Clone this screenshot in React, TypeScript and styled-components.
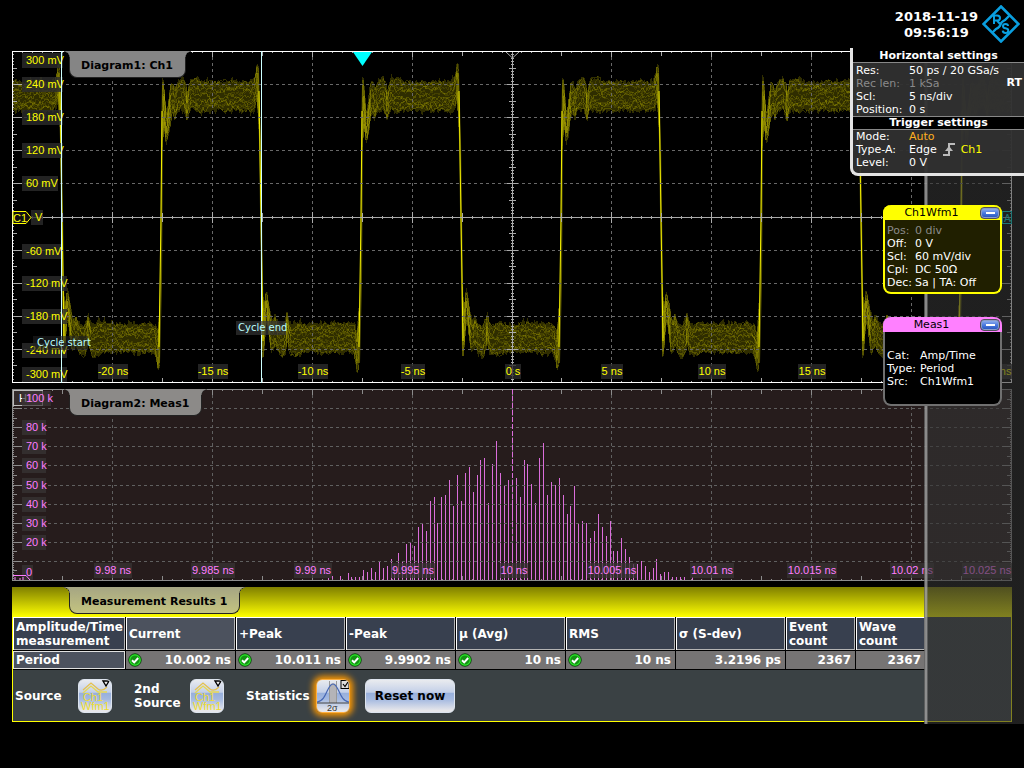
import React from "react";
import styled, { createGlobalStyle } from "styled-components";

const GlobalStyle = createGlobalStyle`
  *, *::before, *::after { box-sizing: border-box; }
  body {
    margin: 0;
    background: #000;
    color: #fff;
    font: 11px/13px "DejaVu Sans", Verdana, sans-serif;
  }
  button { font: inherit; padding: 0; cursor: pointer; }
`;

/* ---------- geometry ---------- */

const W = 1000;
const WAVE_H = 332;
const HISTO_H = 192;

const gridX = (i: number) => Math.round(i * 99.9);
const tickX = (i: number) => Math.round(i * 9.99);
const gridY = (i: number, h: number) => Math.round((i * (h - 1)) / 10);

const range = (n: number) => Array.from({ length: n }, (_, i) => i);

function makeRandom(seed: number) {
  let s = seed;
  return () => {
    s = (s * 1664525 + 1013904223) % 4294967296;
    return s / 4294967296;
  };
}

/* ---------- waveform ---------- */

// Offset from the edge, upper limit, lower limit of a high half period.
const ENVELOPE: [number, number, number][] = [
  [1, 30, 100],
  [2, 24, 92],
  [3, 32, 74],
  [4, 46, 84],
  [5, 58, 91],
  [6, 61, 91],
  [7, 54, 86],
  [8, 46, 80],
  [10, 31, 68],
  [12, 33, 61],
  [14, 38, 69],
  [17, 31, 60],
  [22, 26, 57],
  [25, 33, 65],
  [26, 44, 70],
  [28, 33, 62],
  [30, 29, 57],
  [37, 28, 61],
  [42, 31, 59],
  [90, 31, 59],
  [93, 28, 57],
  [95, 20, 53],
  [96, 12, 49],
  [98, 16, 80],
];

function envelopeAt(dx: number): [number, number] {
  for (let i = 1; i < ENVELOPE.length; i++) {
    const a = ENVELOPE[i - 1];
    const b = ENVELOPE[i];
    if (dx <= b[0]) {
      const f = (dx - a[0]) / (b[0] - a[0]);
      return [a[1] + (b[1] - a[1]) * f, a[2] + (b[2] - a[2]) * f];
    }
  }
  const last = ENVELOPE[ENVELOPE.length - 1];
  return [last[1], last[2]];
}

const LEVELS = [0.05, 0.13, 0.2, 0.27, 0.33, 0.4, 0.52, 0.62, 0.69, 0.75, 0.8, 0.86, 0.94];

function halfPeriod(start: number, high: boolean, seed: number) {
  const rnd = makeRandom(seed);
  const flip = (y: number) => Math.round(high ? y : 332 - y);
  const top: string[] = [];
  const bottom: string[] = [];
  const limits: [number, number, number][] = [];
  for (let dx = 1; dx <= 98; dx++) {
    const x = start + dx;
    const [a, b] = envelopeAt(dx);
    const t = a - rnd() * rnd() * 8 + 1;
    const u = b + rnd() * rnd() * 9 - 1;
    limits.push([x, a, b]);
    if (x < 1 || x > 999) continue;
    top.push(`${x},${flip(t)}`);
    bottom.unshift(`${x},${flip(u)}`);
  }
  const traces = LEVELS.map((level) => {
    let drift = 0;
    return limits
      .filter(([x]) => x >= 1 && x <= 999)
      .map(([x, a, b]) => {
        drift = drift * 0.6 + (rnd() - 0.5) * 5;
        return `${x},${flip(a + (b - a) * level + drift)}`;
      })
      .join(" ");
  });
  return { area: [...top, ...bottom].join(" "), traces };
}

const HALVES = range(11).map((i) => {
  const start = Math.round((i - 1) * 99.95 + 49.5);
  return { start, high: i % 2 === 0, shape: halfPeriod(start, i % 2 === 0, 77 + i * 31) };
});

const Waveform = () => (
  <g>
    {HALVES.map(({ start, high, shape }) => (
      <g key={start} fill="none" shapeRendering="crispEdges">
        <polygon points={shape.area} fill="#2f2d00" />
        {shape.traces.map((points, i) => (
          <polyline key={i} points={points} stroke="#e0d800" strokeOpacity={i % 3 ? 0.12 : 0.22} />
        ))}
        <polyline
          points={[2, 3, 5, 7, 9]
            .map((dx, i) => {
              const y = [45, 60, 82, 68, 48][i];
              return `${start + dx},${high ? y : 332 - y}`;
            })
            .join(" ")}
          stroke="#8f8900"
        />
      </g>
    ))}
    {HALVES.slice(1).map(({ start, high }) => (
      <g key={start} fill="none">
        <polyline
          points={
            high
              ? `${start - 2},312 ${start},230 ${start + 1},90 ${start + 2},34`
              : `${start - 3},22 ${start - 1},90 ${start + 1},230 ${start + 2},300`
          }
          stroke="#8c8600"
          strokeWidth="2"
          strokeOpacity="0.6"
        />
        <polyline
          points={
            high
              ? `${start - 2},296 ${start},166 ${start + 1},60`
              : `${start - 2},40 ${start},166 ${start + 2},290`
          }
          stroke="#f4f000"
          strokeWidth="1"
        />
      </g>
    ))}
  </g>
);

/* ---------- grid ---------- */

type GridProps = { h: number; color: string; line: string; frame: string; axes: boolean };

const Grid = ({ h, color, line, frame, axes }: GridProps) => {
  const mid = gridY(5, h);
  const cx = gridX(5);
  let ticks = "";
  for (let i = 1; i < 100; i++) {
    const x = tickX(i) + 0.5;
    const len = i % 10 === 0 ? 6 : i % 5 === 0 ? 5 : 2;
    ticks += `M${x} 0v${len}M${x} ${h}v${-len}`;
    if (axes) {
      const r = i % 10 === 0 ? 5 : i % 5 === 0 ? 4 : 1;
      ticks += `M${x} ${mid - r}v${2 * r + 1}`;
    }
  }
  for (let i = 1; i < 100; i++) {
    const y = Math.round((i * (h - 1)) / 100) + 0.5;
    const len = i % 10 === 0 ? 10 : i % 5 === 0 ? 5 : 2;
    ticks += `M0 ${y}h${len}M${W} ${y}h${-len}`;
    if (axes) {
      const r = i % 10 === 0 ? 5 : i % 5 === 0 ? 3 : 1;
      ticks += `M${cx - r} ${y}h${2 * r + 1}`;
    }
  }
  return (
    <g fill="none" shapeRendering="crispEdges">
      <g stroke={color} strokeDasharray="3 3">
        {range(9).map((i) => (
          <React.Fragment key={i}>
            <path d={`M0 ${gridY(i + 1, h) + 0.5}H${W}`} />
            <path d={`M${gridX(i + 1) + 0.5} 0V${h}`} />
          </React.Fragment>
        ))}
      </g>
      <path d={ticks} stroke={line} />
      {axes && <path d={`M0 ${mid + 0.5}H${W}M${cx + 0.5} 0V${h}`} stroke={line} />}
      <rect x="0.5" y="0.5" width={W - 1} height={h - 1} stroke={frame} />
    </g>
  );
};

/* ---------- axis labels ---------- */

type LabelProps = {
  x: number;
  y: number;
  w: number;
  text: string;
  color: string;
  back: string;
  anchor?: "start" | "middle";
};

const AxisLabel = ({ x, y, w, text, color, back, anchor = "start" }: LabelProps) => (
  <g>
    <rect x={anchor === "middle" ? x - w / 2 : x - 4} y={y - 7} width={w} height="15" fill={back} />
    <text
      x={x}
      y={y + 4}
      fill={color}
      textAnchor={anchor}
      fontSize="11"
      fontFamily='"Liberation Sans", Arial, sans-serif'
    >
      {text}
    </text>
  </g>
);

const VOLTS: [string, number, number][] = [
  ["300 mV", 9, 41],
  ["240 mV", 33, 41],
  ["180 mV", 66, 41],
  ["120 mV", 99, 41],
  ["60 mV", 132, 36],
  ["-60 mV", 200, 39],
  ["-120 mV", 232, 45],
  ["-180 mV", 265, 45],
  ["-240 mV", 299, 45],
  ["-300 mV", 323, 45],
];

const TIMES: [string, number, number][] = [
  ["-20 ns", 101, 30],
  ["-15 ns", 201, 30],
  ["-10 ns", 301, 30],
  ["-5 ns", 401, 24],
  ["0 s", 501, 16],
  ["5 ns", 600, 22],
  ["10 ns", 700, 28],
  ["15 ns", 800, 28],
  ["25 ns", 986, 28],
];

const COUNTS: [string, number, number][] = [
  ["80 k", 38, 24],
  ["70 k", 57, 24],
  ["60 k", 76, 24],
  ["50 k", 96, 24],
  ["40 k", 115, 24],
  ["30 k", 134, 24],
  ["20 k", 153, 24],
  ["0", 183, 11],
];

const PERIODS: [string, number, number][] = [
  ["9.98 ns", 101, 38],
  ["9.985 ns", 201, 44],
  ["9.99 ns", 301, 38],
  ["9.995 ns", 401, 44],
  ["10 ns", 502, 28],
  ["10.005 ns", 600, 50],
  ["10.01 ns", 700, 44],
  ["10.015 ns", 800, 50],
  ["10.02 ns", 900, 44],
  ["10.025 ns", 975, 50],
];

const BINS = [
  2, 4, 0, 4, 0, 7, 3, 3, 3, 10, 8, 12, 8, 19, 12, 14, 21, 14, 27, 19, 36, 38, 34, 53, 57, 49, 79,
  83, 57, 83, 85, 100, 74, 105, 79, 107, 113, 88, 105, 120, 122, 77, 116, 139, 107, 95, 100, 84,
  102, 83, 120, 116, 96, 77, 122, 137, 85, 98, 95, 102, 85, 66, 74, 94, 57, 59, 57, 42, 49, 66, 53,
  44, 59, 29, 29, 42, 31, 23, 16, 16, 19, 14, 8, 12, 21, 6, 8, 8, 3, 3, 3, 3, 0, 3,
];

/* ---------- page shell ---------- */

const Screen = styled.div`
  min-height: 100vh;
  background: #000;
`;

const Header = styled.header`
  display: flex;
  justify-content: flex-end;
  align-items: flex-start;
  gap: 4px;
  height: 48px;
  padding: 5px 4px 0 0;
`;

const Clock = styled.time`
  padding-top: 4px;
  font-size: 13px;
  line-height: 16px;
  font-weight: bold;
  text-align: center;

  span { display: block; }
`;

const Workspace = styled.main`
  position: relative;
  display: flex;
  flex-direction: column;
  gap: 6px;
  padding: 3px 12px 2px;
`;

const Diagram = styled.section`
  position: relative;

  > svg { display: block; width: 100%; height: auto; }
`;

const Tab = styled.h2<{ $tint?: string; $flare?: string }>`
  position: absolute;
  top: 0;
  left: 57px;
  height: 27px;
  margin: 0;
  padding: 0 12px 0 11px;
  border: 1px solid #222;
  border-top: 0;
  border-radius: 0 0 8px 8px;
  background: ${(p) => p.$tint ?? "#858585"};
  color: #000;
  font-size: 11px;
  line-height: 30px;
  font-weight: bold;
  white-space: nowrap;

  &::before,
  &::after {
    content: "";
    position: absolute;
    top: 0;
    width: 6px;
    height: 6px;
  }
  &::before {
    right: 100%;
    background: radial-gradient(circle at 0 100%, transparent 5px, #222 5px, ${(p) => p.$flare ?? "#858585"} 6px);
  }
  &::after {
    left: 100%;
    background: radial-gradient(circle at 100% 100%, transparent 5px, #222 5px, ${(p) => p.$flare ?? "#858585"} 6px);
  }
`;

/* ---------- dock on the right ---------- */

const Dock = styled.aside`
  position: absolute;
  top: 0;
  right: 0;
  bottom: 0;
  display: flex;
  flex-direction: column;
  align-items: stretch;
  width: 174px;
  background: linear-gradient(
    90deg,
    transparent 74px,
    rgba(100, 100, 100, 0.8) 74px 75px,
    rgba(150, 150, 150, 0.9) 75px 77px,
    rgba(100, 100, 100, 0.8) 77px 78px,
    rgba(51, 51, 51, 0.62) 78px
  );
`;

const Settings = styled.div`
  position: relative;
  height: 128px;
  border: solid #e4e4e4;
  border-width: 0 0 3px 3px;
  border-radius: 0 0 0 8px;
  background: rgba(48, 48, 48, 0.95);
  overflow: hidden;
`;

const SettingsTitle = styled.h3`
  height: 15px;
  margin: 0;
  border-bottom: 1px solid #888;
  background: #000;
  font-size: 11px;
  line-height: 16px;
  font-weight: bold;
  text-align: center;

  & ~ & {
    height: 14px;
    border-top: 1px solid #888;
    line-height: 12px;
  }
`;

const Fields = styled.dl<{ $label: number; $pad: string }>`
  display: grid;
  grid-template-columns: ${(p) => p.$label}px 1fr;
  grid-auto-rows: 13px;
  margin: 0;
  padding: ${(p) => p.$pad};
  line-height: 13px;
  white-space: nowrap;

  dt, dd { margin: 0; }
`;

const Source = styled.dd`
  display: flex;
  gap: 5px;
`;

const Tone = styled.span<{ $color: string }>`
  color: ${(p) => p.$color};
`;

const Mode = styled.strong`
  position: absolute;
  top: 28px;
  right: 2px;
  line-height: 13px;
`;

const CardStack = styled.div`
  display: flex;
  flex-direction: column;
  gap: 23px;
  padding: 29px 22px 0 33px;
`;

const SignalCard = styled.section<{ $color: string; $edge: string; $back: string }>`
  height: 89px;
  border: 2px solid ${(p) => p.$edge};
  border-top: 0;
  border-radius: 8px;
  background: ${(p) => p.$back};

  > header {
    display: flex;
    align-items: center;
    height: 15px;
    margin: 0 -2px;
    padding: 0 2px 0 0;
    border-radius: 8px 8px 0 0;
    background: ${(p) => p.$color};
    color: #000;
  }

  h3 {
    flex: 1;
    margin: 0;
    font-size: 11px;
    line-height: 15px;
    font-weight: normal;
    text-align: center;
  }
`;

const Minimise = styled.button`
  display: grid;
  place-items: center;
  width: 20px;
  height: 12px;
  border: 1px solid #50505a;
  border-radius: 4px;
  background: linear-gradient(#9db8ee, #4a7ae0 50%, #2350b8);
  box-shadow: inset 0 0 0 1px #8a9cc8;

  &::before {
    content: "";
    width: 9px;
    height: 2px;
    background: #fff;
  }
`;

/* ---------- results ---------- */

const Results = styled.section`
  position: relative;
  border: solid #ff0;
  border-width: 0 1px 1px;
  background: #3a4144;
`;

const ResultsBar = styled.header`
  position: relative;
  height: 30px;
  margin: 0 -1px;
  background: linear-gradient(#7f7f00, #ff0);
`;

const TableWrap = styled.div`
  padding-right: 85px;
`;

const Table = styled.table`
  width: 100%;
  table-layout: fixed;
  border-collapse: separate;
  border-spacing: 0;
  font-size: 12px;
  line-height: 14px;
  font-weight: bold;
`;

const HeadCell = styled.th<{ $lit?: boolean; $w: number }>`
  width: ${(p) => p.$w}px;
  height: 34px;
  padding: 0 0 0 3px;
  border: solid #000;
  border-width: 0 1px 1px 0;
  background: ${(p) => (p.$lit ? "#4c525e" : "#38404f")};
  box-shadow: inset 1px 1px #fff, inset -1px -1px #b4b4b4;
  text-align: left;
`;

const RowHead = styled.th`
  height: 19px;
  padding: 0 3px;
  border: solid #000;
  border-width: 0 1px 1px 0;
  background: #4c525e;
  box-shadow: inset 0 0 0 1px #e0e0e0;
  text-align: left;
`;

const Cell = styled.td`
  height: 19px;
  padding: 0 4px 0 2px;
  border: solid #000;
  border-width: 0 1px 1px 0;
  background: #767474;
`;

const Value = styled.div`
  display: flex;
  justify-content: space-between;
  align-items: center;
  white-space: nowrap;

  > :only-child { margin-left: auto; }
`;

const Controls = styled.div`
  display: flex;
  align-items: center;
  height: 51px;
  padding-left: 2px;
  font-size: 12px;
  line-height: 14px;
  font-weight: bold;
`;

const Caption = styled.label<{ $w: number }>`
  width: ${(p) => p.$w}px;
`;

const GlassButton = styled.button<{ $w: number; $gap: number; $active?: boolean }>`
  width: ${(p) => p.$w}px;
  height: 34px;
  margin-right: ${(p) => p.$gap}px;
  border: 1px solid ${(p) => (p.$active ? "#ffb040" : "#dde4ee")};
  border-radius: 6px;
  background: linear-gradient(#e9ebef, #c4d0e8 38%, #98b0dc 42%, #a4b9e0 60%, #e6e6ea 95%);
  box-shadow: ${(p) => (p.$active ? "0 0 6px 3px #ff9a00" : "none")};
  color: #000;
  font-weight: bold;
  overflow: hidden;

  svg { display: block; margin: -1px; }
`;

/* ---------- drawings ---------- */

const Logo = () => (
  <svg width="38" height="38" viewBox="0 0 38 38" fill="none" stroke="#0a9fe0" strokeWidth="2" aria-label="R&S">
    <path d="M19 1.500L36.500 19L19 36.500L1.500 19Z" strokeWidth="2.6" />
    <path d="M10 28L14 24Q18 22 18.500 19.500Q19 17 23 15L28 10" strokeWidth="2.4" />
    <path d="M12 19V10.500H15Q18 10.500 18 13T15 15.500H12M15 15.500L18 19" />
    <path d="M26 21Q26 19 23.500 19Q21 19 21 21Q21 23 23.500 23.300Q26.300 23.700 26.300 25.500Q26.300 28 23.500 28Q21 28 20.700 25.700" />
  </svg>
);

const RisingEdge = () => (
  <svg width="14" height="13" viewBox="0 0 14 13" fill="none" stroke="#bbb" strokeWidth="2">
    <path d="M1 12H7V1H13" />
    <path d="M3 8H11L7 3Z" fill="#bbb" stroke="none" />
  </svg>
);

const CheckMark = () => (
  <svg width="14" height="14" viewBox="0 0 14 14" fill="none">
    <circle cx="7" cy="7" r="6.2" fill="#149414" stroke="#0a3d0a" />
    <circle cx="7" cy="7" r="5.2" stroke="#2bea2b" strokeWidth="1.2" />
    <path d="M4 7.2L6.2 9.4L10.2 5" stroke="#fff" strokeWidth="2" />
  </svg>
);

const SourceArt = () => (
  <svg width="34" height="34" viewBox="0 0 34 34" fill="none">
    <path d="M5 11L13 4L20 10Q24 13 29 8" stroke="#e5c050" strokeWidth="1.3" />
    <path d="M5 14L13 7L20 13H29" stroke="#e8d850" strokeWidth="1.3" />
    <g fill="#eedc30" fontFamily='"Liberation Sans", Arial, sans-serif' fontSize="11" fontWeight="normal">
      <text x="5" y="22">Ch1</text>
      <text x="3" y="31">Wfm1</text>
    </g>
    <path d="M25 2H31L28 7Z" fill="#eee" stroke="#000" strokeWidth="1.4" />
  </svg>
);

const GaussArt = () => (
  <svg width="34" height="34" viewBox="0 0 34 34" fill="none">
    <path d="M13 24V7Q17 1 21 7V24Z" fill="#b4b4b8" />
    <path d="M13.5 2V24M20.5 2V24" stroke="#999" />
    <path d="M1 23C11 22 11 5 17 5S23 22 33 23" stroke="#4667b4" strokeWidth="1.2" />
    <path d="M0 24H34" stroke="#444" />
    <text x="11" y="32" fill="#333" fontFamily='"Liberation Sans", Arial, sans-serif' fontSize="9" fontWeight="normal">
      2σ
    </text>
    <rect x="25" y="1.5" width="8" height="8" fill="#ddd" stroke="#000" />
    <path d="M27 5L29 7.5L32 3" stroke="#000" strokeWidth="1.2" />
  </svg>
);

/* ---------- diagrams ---------- */

const LABEL_FONT = '"DejaVu Sans", Verdana, sans-serif';

const WaveDiagram = () => (
  <Diagram>
    <svg viewBox={`0 0 ${W} ${WAVE_H}`}>
      <Waveform />
      <Grid h={WAVE_H} color="#686868" line="#aaa" frame="#fff" axes />
      {VOLTS.map(([text, y, w]) => (
        <AxisLabel key={text} x={14} y={y} w={w} text={text} color="#ff0" back="rgba(44,44,44,.8)" />
      ))}
      {TIMES.map(([text, x, w]) => (
        <AxisLabel key={text} x={x} y={320} w={w} text={text} color="#ff0" back="rgba(44,44,44,.8)" anchor="middle" />
      ))}
      <AxisLabel x={23} y={166} w={12} text="V" color="#ff0" back="rgba(44,44,44,.8)" />
      <path d="M1 160.500H14L19 166.500L14 172.500H1Z" fill="#111" stroke="#ff0" />
      <text x="1" y="171" fill="#ff0" fontSize="11" fontFamily='"Liberation Sans", Arial, sans-serif'>C1</text>
      <path d="M49.500 0V332M249.500 0V332" stroke="#ccffff" />
      <g fontSize="10" fontFamily={LABEL_FONT} fill="#bff">
        <rect x="21" y="285" width="55" height="14" fill="#222" fillOpacity="0.6" />
        <text x="25" y="295">Cycle start</text>
        <rect x="224" y="270" width="50" height="14" fill="#333" fillOpacity="0.7" />
        <text x="226" y="280">Cycle end</text>
      </g>
      <path d="M341 1H360L350.500 15Z" fill="#0ff" />
      <path d="M494 1L500.500 7L507 1" fill="none" stroke="#aaa" />
      <rect x="990.500" y="160.500" width="9" height="12" fill="none" stroke="#00e5e5" />
      <text x="992" y="171" fill="#00e5e5" fontSize="10" fontFamily={LABEL_FONT}>A</text>
    </svg>
    <Tab>Diagram1: Ch1</Tab>
  </Diagram>
);

const HistogramDiagram = () => (
  <Diagram>
    <svg viewBox={`0 0 ${W} ${HISTO_H}`}>
      <rect width={W} height={HISTO_H} fill="#261c1c" />
      <g fill="#db6ddb" shapeRendering="crispEdges">
        {BINS.map((height, i) => (
          <rect key={i} x={Math.round(316 + i * 3.91)} y={HISTO_H - 1 - height} width="1" height={height} />
        ))}
      </g>
      <Grid h={HISTO_H} color="#606060" line="#8c8c8c" frame="#8c8c8c" axes={false} />
      <path d="M500.500 0V191" stroke="#db6ddb" strokeDasharray="5 2" />
      <rect x="1.500" y="1.500" width="29" height="15" fill="#332b2b" stroke="#bbb" />
      <text x="7" y="13" fill="#fff" fontSize="11" fontFamily='"Liberation Sans", Arial, sans-serif'>H1</text>
      <AxisLabel x={14} y={9} w={29} text="100 k" color="#ff7dff" back="rgba(58,52,52,.7)" />
      {COUNTS.map(([text, y, w]) => (
        <AxisLabel key={text} x={14} y={y} w={w} text={text} color="#ff7dff" back="#332e2e" />
      ))}
      {PERIODS.map(([text, x, w]) => (
        <AxisLabel key={text} x={x} y={181} w={w} text={text} color="#ff7dff" back="rgba(56,51,51,.75)" anchor="middle" />
      ))}
      <path d="M1 186.500H14L18 191" fill="none" stroke="#ff7dff" />
      <path d="M3 191V188M8 191V189M11 191V188" fill="none" stroke="#ff7dff" />
    </svg>
    <Tab $tint="#8c8a88" $flare="#8c8a88">Diagram2: Meas1</Tab>
  </Diagram>
);

/* ---------- results table ---------- */

const COLUMNS: { title: string; value: string; ok?: boolean; w: number }[] = [
  { title: "Current", value: "10.002 ns", ok: true, w: 110 },
  { title: "+Peak", value: "10.011 ns", ok: true, w: 110 },
  { title: "-Peak", value: "9.9902 ns", ok: true, w: 110 },
  { title: "μ (Avg)", value: "10 ns", ok: true, w: 110 },
  { title: "RMS", value: "10 ns", ok: true, w: 110 },
  { title: "σ (S-dev)", value: "3.2196 ps", w: 110 },
  { title: "Event count", value: "2367", w: 70 },
  { title: "Wave count", value: "2367", w: 70 },
];

const ResultsPanel = () => (
  <Results>
    <ResultsBar>
      <Tab $tint="linear-gradient(#a5a583, #c4c480)" $flare="#a8a883">Measurement Results 1</Tab>
    </ResultsBar>
    <TableWrap>
      <Table>
        <thead>
          <tr>
            <HeadCell $w={113}>Amplitude/Time measurement</HeadCell>
            {COLUMNS.map((c, i) => (
              <HeadCell key={c.title} $w={c.w} $lit={i === 0}>
                {c.title}
              </HeadCell>
            ))}
          </tr>
        </thead>
        <tbody>
          <tr>
            <RowHead scope="row">Period</RowHead>
            {COLUMNS.map((c) => (
              <Cell key={c.title}>
                <Value>
                  {c.ok && <CheckMark />}
                  <span>{c.value}</span>
                </Value>
              </Cell>
            ))}
          </tr>
        </tbody>
      </Table>
    </TableWrap>
    <Controls>
      <Caption htmlFor="source" $w={63}>Source</Caption>
      <GlassButton id="source" $w={34} $gap={22}><SourceArt /></GlassButton>
      <Caption htmlFor="source2" $w={56}>2nd Source</Caption>
      <GlassButton id="source2" $w={34} $gap={22}><SourceArt /></GlassButton>
      <Caption htmlFor="statistics" $w={70}>Statistics</Caption>
      <GlassButton id="statistics" $w={34} $gap={15} $active aria-pressed="true"><GaussArt /></GlassButton>
      <GlassButton $w={90} $gap={0}>Reset now</GlassButton>
    </Controls>
  </Results>
);

/* ---------- signal cards ---------- */

const SignalCards = () => (
  <CardStack>
    <SignalCard $color="#ff0" $edge="#ff0" $back="#201f00">
      <header>
        <h3>Ch1Wfm1</h3>
        <Minimise aria-label="Minimise Ch1Wfm1" />
      </header>
      <Fields $label={28} $pad="4px 0 0 2px">
        <dt><Tone $color="#8a8a8a">Pos:</Tone></dt>
        <dd><Tone $color="#8a8a8a">0 div</Tone></dd>
        <dt>Off:</dt>
        <dd>0 V</dd>
        <dt>Scl:</dt>
        <dd>60 mV/div</dd>
        <dt>Cpl:</dt>
        <dd>DC 50Ω</dd>
        <dt>Dec:</dt>
        <dd>Sa | TA: Off</dd>
      </Fields>
    </SignalCard>
    <SignalCard $color="#ff80ff" $edge="#707070" $back="#000">
      <header>
        <h3>Meas1</h3>
        <Minimise aria-label="Minimise Meas1" />
      </header>
      <Fields $label={33} $pad="17px 0 0 2px">
        <dt>Cat:</dt>
        <dd>Amp/Time</dd>
        <dt>Type:</dt>
        <dd>Period</dd>
        <dt>Src:</dt>
        <dd>Ch1Wfm1</dd>
      </Fields>
    </SignalCard>
  </CardStack>
);

export default function App() {
  return (
    <Screen>
      <GlobalStyle />
      <Header>
        <Clock dateTime="2018-11-19T09:56:19">
          <span>2018-11-19</span>
          <span>09:56:19</span>
        </Clock>
        <Logo />
      </Header>
      <Workspace>
        <WaveDiagram />
        <HistogramDiagram />
        <ResultsPanel />
        <Dock>
          <Settings>
            <SettingsTitle>Horizontal settings</SettingsTitle>
            <Fields $label={53} $pad="1px 0 0 3px">
              <dt>Res:</dt>
              <dd>50 ps / 20 GSa/s</dd>
              <dt><Tone $color="#8a8a8a">Rec len:</Tone></dt>
              <dd><Tone $color="#8a8a8a">1 kSa</Tone></dd>
              <dt>Scl:</dt>
              <dd>5 ns/div</dd>
              <dt>Position:</dt>
              <dd>0 s</dd>
            </Fields>
            <Mode>RT</Mode>
            <SettingsTitle>Trigger settings</SettingsTitle>
            <Fields $label={53} $pad="0 0 0 3px">
              <dt>Mode:</dt>
              <dd><Tone $color="#ffb020">Auto</Tone></dd>
              <dt>Type-A:</dt>
              <Source>
                Edge
                <RisingEdge />
                <Tone $color="#ff0">Ch1</Tone>
              </Source>
              <dt>Level:</dt>
              <dd>0 V</dd>
            </Fields>
          </Settings>
          <SignalCards />
        </Dock>
      </Workspace>
    </Screen>
  );
}
